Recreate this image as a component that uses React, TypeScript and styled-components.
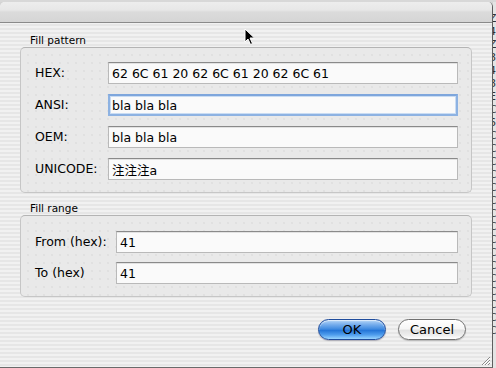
import React from "react";
import styled, { createGlobalStyle } from "styled-components";

const GlobalStyle = createGlobalStyle`
  html, body { margin: 0; padding: 0; }
  body {
    width: 496px;
    height: 368px;
    overflow: hidden;
    background: #d4d4d4;
    font-family: "DejaVu Sans", "Noto Sans CJK JP", sans-serif;
    color: #000;
  }
  * { box-sizing: border-box; }
`;

const Screen = styled.div`
  width: 496px;
  height: 368px;
  display: flex;
  flex-direction: column;
  position: relative;
  overflow: hidden;
`;

const TopStrip = styled.div`
  height: 2px;
  background: #d8d8d8;
`;

const Main = styled.div`
  flex: 1;
  display: flex;
`;

const Window = styled.div`
  width: 493px;
  display: flex;
  flex-direction: column;
  position: relative;
  border-radius: 5px 5px 0 0;
  overflow: hidden;
  border-right: 1px solid #5e5e5e;
  border-bottom: 1px solid #6a6a6a;
  background: repeating-linear-gradient(
    to bottom,
    #f1f1f1 0px,
    #f1f1f1 2px,
    #e6e6e6 2px,
    #e6e6e6 4px
  );
`;

const TitleBar = styled.div`
  height: 21px;
  flex: none;
  border-bottom: 1px solid #8a8a8a;
  background: linear-gradient(
    to bottom,
    #ededed 0%,
    #e7e7e7 40%,
    #dbdbdb 50%,
    #d5d5d5 100%
  );
`;

const Body = styled.div`
  flex: 1;
  display: flex;
  flex-direction: column;
  padding: 10px 20px 0 20px;
`;

const SectionLabel = styled.div<{ $gap?: number }>`
  font-size: 10.5px;
  line-height: 14px;
  height: 14px;
  margin-left: 10px;
  margin-top: ${(p) => p.$gap ?? 0}px;
`;

const Group = styled.div<{ $labelWidth: number; $padTop: number; $rowGap: number }>`
  display: grid;
  grid-template-columns: ${(p) => p.$labelWidth}px 1fr;
  row-gap: ${(p) => p.$rowGap}px;
  align-items: center;
  padding: ${(p) => p.$padTop}px 13px 12px 14px;
  border: 1px solid #c6c6c6;
  border-top-color: #b4b4b4;
  border-radius: 5px;
  background-color: #e9e9e9;
  background-image: radial-gradient(circle, #dcdcdc 0.6px, transparent 0.9px);
  background-size: 8px 8px;
  background-position: 3px 3px;
`;

const FieldLabel = styled.div`
  font-size: 12.5px;
  line-height: 22px;
`;

const Field = styled.div<{ $focused?: boolean }>`
  height: 22px;
  display: flex;
  align-items: center;
  padding-left: ${(p) => (p.$focused ? 2 : 3)}px;
  font-size: 12.5px;
  background: #fafafa;
  border: ${(p) => (p.$focused ? "2px solid #8db2e2" : "1px solid #b9b9b9")};
  border-top-color: ${(p) => (p.$focused ? "#7ea6dc" : "#8a8a8a")};
  box-shadow: ${(p) =>
    p.$focused ? "inset 0 0 0 1px #c9dcf3" : "inset 0 1px 0 #e2e2e2"};
  white-space: nowrap;
  overflow: hidden;
`;

const ButtonRow = styled.div`
  display: flex;
  justify-content: flex-end;
  gap: 12px;
  margin-top: 22px;
  padding-right: 6px;
`;

const AquaButton = styled.div<{ $primary?: boolean }>`
  width: 68px;
  height: 21px;
  border-radius: 11px;
  display: flex;
  align-items: center;
  justify-content: center;
  font-size: 13px;
  color: #000;
  border: 1px solid ${(p) => (p.$primary ? "#1f4c9c" : "#707070")};
  background: ${(p) =>
    p.$primary
      ? "linear-gradient(to bottom, #b6d6f7 0%, #74acec 25%, #3f8ae0 48%, #2576d8 55%, #4f9ded 78%, #98d4ff 100%)"
      : "linear-gradient(to bottom, #ffffff 0%, #f6f6f6 45%, #e2e2e2 55%, #eeeeee 80%, #ffffff 100%)"};
  box-shadow: ${(p) =>
    p.$primary
      ? "0 1px 1px rgba(0,0,40,0.25), inset 0 1px 1px rgba(255,255,255,0.6)"
      : "0 1px 1px rgba(0,0,0,0.2), inset 0 1px 1px rgba(255,255,255,0.9)"};
`;

const Grip = styled.svg`
  position: absolute;
  right: 1px;
  bottom: 1px;
`;

const Cursor = styled.svg`
  position: absolute;
  left: 244px;
  top: 28px;
`;

const RightStrip = styled.div`
  width: 3px;
  background: #e4e4e4;
  overflow: hidden;
  font-size: 11px;
  line-height: 13px;
  color: #333;
  padding-top: 10px;
`;

const StripGlyph = styled.div`
  margin-left: -4px;
`;

const stripGlyphs = ["Z", "4", "Z", "8", "4", "8", "E", "C", "6", "C", "C", "C", "C", "C", "C", "C", "C", "C", "C", "C", "C", "C", "C", "C", "C"];

export default function App() {
  return (
    <>
      <GlobalStyle />
      <Screen>
        <TopStrip />
        <Main>
          <Window>
            <TitleBar />
            <Body>
              <SectionLabel>Fill pattern</SectionLabel>
              <Group $labelWidth={73} $padTop={14} $rowGap={10}>
                <FieldLabel>HEX:</FieldLabel>
                <Field>62 6C 61 20 62 6C 61 20 62 6C 61</Field>
                <FieldLabel>ANSI:</FieldLabel>
                <Field $focused>bla bla bla</Field>
                <FieldLabel>OEM:</FieldLabel>
                <Field>bla bla bla</Field>
                <FieldLabel>UNICODE:</FieldLabel>
                <Field>注注注a</Field>
              </Group>
              <SectionLabel $gap={8}>Fill range</SectionLabel>
              <Group $labelWidth={81} $padTop={15} $rowGap={9}>
                <FieldLabel>From (hex):</FieldLabel>
                <Field>41</Field>
                <FieldLabel>To (hex)</FieldLabel>
                <Field>41</Field>
              </Group>
              <ButtonRow>
                <AquaButton $primary>OK</AquaButton>
                <AquaButton>Cancel</AquaButton>
              </ButtonRow>
            </Body>
            <Grip width="12" height="12" viewBox="0 0 12 12">
              <path d="M11 3 L3 11 M11 6 L6 11 M11 9 L9 11" stroke="#8a8a8a" strokeWidth="1" />
              <path d="M11 4 L4 11 M11 7 L7 11" stroke="#ffffff" strokeWidth="1" />
            </Grip>
          </Window>
          <RightStrip>
            {stripGlyphs.map((g, i) => (
              <StripGlyph key={i}>{g}</StripGlyph>
            ))}
          </RightStrip>
        </Main>
        <Cursor width="12" height="18" viewBox="0 0 12 18">
          <path d="M1 1 L1 14 L4 11 L6.5 16.5 L8.5 15.5 L6 10 L10.5 10 Z" fill="#000" stroke="#fff" strokeWidth="1" />
        </Cursor>
      </Screen>
    </>
  );
}
